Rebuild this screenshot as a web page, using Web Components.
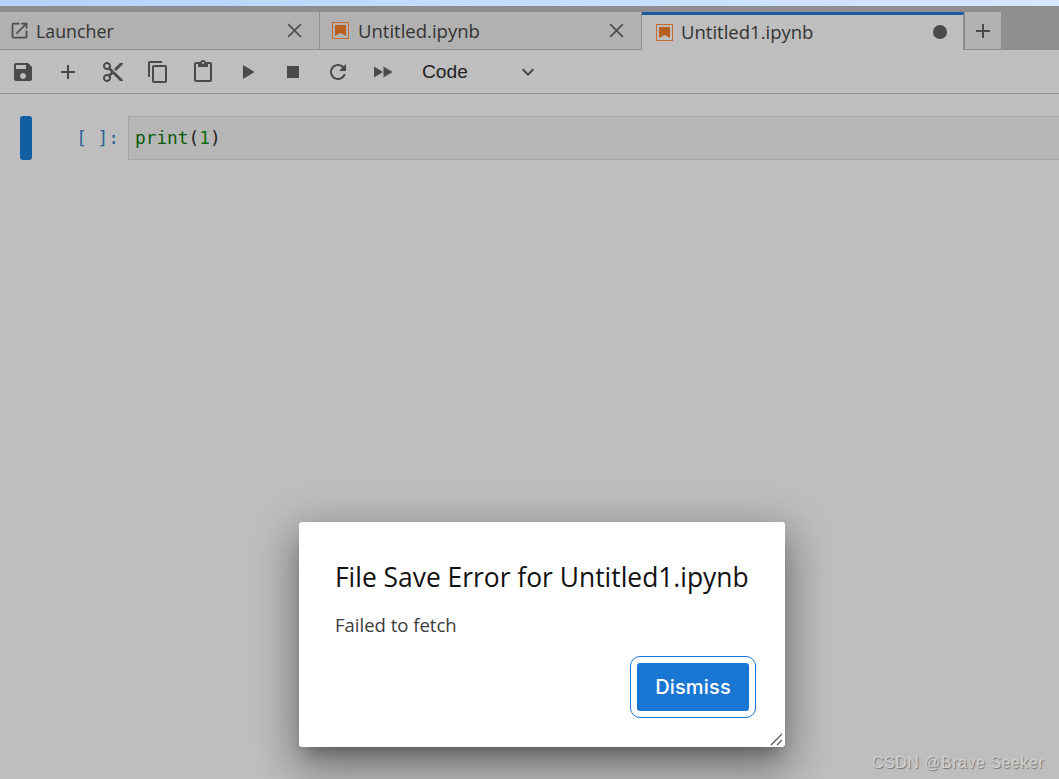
<!DOCTYPE html>
<html>
<head>
<meta charset="utf-8">
<title>Untitled1.ipynb</title>
<style>
  html, body { margin: 0; height: 100%; }
  body {
    position: relative;
    height: 779px;
    overflow: hidden;
    background: #bebebe;
    font-family: "Open Sans", "Noto Sans", sans-serif;
    color: #2b2b2b;
  }
</style>
</head>
<body>
  <jp-tabbar>
    <jp-tab icon="launcher" width="320">Launcher</jp-tab>
    <jp-tab icon="notebook" width="322">Untitled.ipynb</jp-tab>
    <jp-tab icon="notebook" width="322" active dirty>Untitled1.ipynb</jp-tab>
  </jp-tabbar>
  <jp-toolbar></jp-toolbar>
  <jp-cell>print(1)</jp-cell>
  <jp-dialog heading="File Save Error for Untitled1.ipynb">Failed to fetch</jp-dialog>
  <jp-watermark>CSDN @Brave Seeker</jp-watermark>

<script>
const ICONS = {
  save: 'M17 3H5a2 2 0 0 0-2 2v14c0 1.1.9 2 2 2h14c1.1 0 2-.9 2-2V7l-4-4zm-5 16c-1.66 0-3-1.34-3-3s1.34-3 3-3 3 1.34 3 3-1.34 3-3 3zm3-10H5V5h10v4z',
  add: 'M19 13h-6v6h-2v-6H5v-2h6V5h2v6h6v2z',
  cut: 'M9.64 7.64c.23-.5.36-1.05.36-1.64 0-2.21-1.79-4-4-4S2 3.79 2 6s1.79 4 4 4c.59 0 1.14-.13 1.64-.36L10 12l-2.36 2.36C7.14 14.13 6.59 14 6 14c-2.21 0-4 1.79-4 4s1.79 4 4 4 4-1.79 4-4c0-.59-.13-1.14-.36-1.64L12 14l7 7h3v-1L9.64 7.64zM6 8c-1.1 0-2-.89-2-2s.9-2 2-2 2 .89 2 2-.9 2-2 2zm0 12c-1.1 0-2-.89-2-2s.9-2 2-2 2 .89 2 2-.9 2-2 2zm6-7.5c-.28 0-.5-.22-.5-.5s.22-.5.5-.5.5.22.5.5-.22.5-.5.5zM19 3l-6 6 2 2 7-7V3z',
  copy: 'M16 1H4c-1.1 0-2 .9-2 2v14h2V3h12V1zm3 4H8c-1.1 0-2 .9-2 2v14c0 1.1.9 2 2 2h11c1.1 0 2-.9 2-2V7c0-1.1-.9-2-2-2zm0 16H8V7h11v14z',
  paste: 'M19 2h-4.18C14.4.84 13.3 0 12 0c-1.3 0-2.4.84-2.82 2H5c-1.1 0-2 .9-2 2v16c0 1.1.9 2 2 2h14c1.1 0 2-.9 2-2V4c0-1.1-.9-2-2-2zm-7 0c.55 0 1 .45 1 1s-.45 1-1 1-1-.45-1-1 .45-1 1-1zm7 18H5V4h2v3h10V4h2v16z',
  run: 'M7 5v14l11.5-7z',
  stop: 'M6 6h12v12H6z',
  refresh: 'M17.65 6.35C16.2 4.9 14.21 4 12 4c-4.42 0-7.99 3.58-7.99 8s3.57 8 7.99 8c3.73 0 6.84-2.55 7.73-6h-2.08c-.82 2.33-3.04 4-5.65 4-3.31 0-6-2.69-6-6s2.69-6 6-6c1.66 0 3.14.69 4.22 1.78L13 11h7V4l-2.35 2.35z',
  fastforward: 'M3 6.5v11l9-5.5zm9.5 0v11l9-5.5z',
  launcher: 'M19 19H5V5h7V3H5a2 2 0 0 0-2 2v14a2 2 0 0 0 2 2h14c1.1 0 2-.9 2-2v-7h-2v7zM14 3v2h3.59l-9.83 9.83 1.41 1.41L19 6.41V10h2V3h-7z',
  close: 'M5.4 4 12 10.6 18.6 4 20 5.4 13.4 12l6.6 6.6-1.4 1.4-6.6-6.6L5.4 20 4 18.6l6.6-6.6L4 5.4z',
  chevron: 'M7.4 8.6 12 13.2l4.6-4.6L18 10l-6 6-6-6z'
};

function svgIcon(name, size, color) {
  return `<svg width="${size}" height="${size}" viewBox="0 0 24 24" fill="${color}"><path d="${ICONS[name]}"/></svg>`;
}

class JpTabbar extends HTMLElement {
  constructor() {
    super();
    this.attachShadow({ mode: 'open' }).innerHTML = `
    <style>
      :host { display: block; height: 50px; background: linear-gradient(#8e8e8e, #8e8e8e) 0 6px no-repeat; box-sizing: border-box; }
      .sky { height: 6px; background: linear-gradient(90deg, #b5d3ff, #d6e7ff); }
      .tabs { display: flex; height: 44px; padding-top: 6px; box-sizing: border-box; }
      .add {
        width: 37px; height: 38px; box-sizing: border-box; display: flex; align-items: center; justify-content: center;
        background: #b1b1b1; border-left: 1px solid #8a8a8a; border-bottom: 1px solid #8a8a8a;
      }
    </style>
    <div class="sky"></div>
    <div class="tabs">
      <slot></slot>
      <div class="add">${svgIcon('add', 24, '#4a4a4a')}</div>
    </div>`;
  }
}

class JpTab extends HTMLElement {
  connectedCallback() {
    const active = this.hasAttribute('active');
    const notebook = this.getAttribute('icon') === 'notebook';
    const icon = notebook
      ? `<svg width="19" height="19" viewBox="0 0 19 19"><rect x="1.5" y="1.5" width="16" height="16" fill="none" stroke="#c9692a"/><path d="M4 4h11v11l-5.5-3L4 15z" fill="#b9601f"/></svg>`
      : svgIcon('launcher', 21, '#4f4f4f');
    const end = this.hasAttribute('dirty')
      ? `<span class="dot"></span>`
      : svgIcon('close', 21, '#4f4f4f');
    const left = active ? 13 : notebook ? 11 : 9;
    const gap = active ? 7 : notebook ? 8 : 6;
    this.attachShadow({ mode: 'open' }).innerHTML = `
    <style>
      :host { display: block; width: ${this.getAttribute('width')}px; height: 38px; flex: none; }
      .tab {
        height: 100%; box-sizing: border-box; display: flex; align-items: center; gap: ${gap}px;
        padding: 0 14px 0 ${left}px;
        background: ${active ? '#bebebe' : '#b1b1b1'};
        border-right: 1px solid #8f8f8f;
        border-bottom: ${active ? '0' : '1px solid #8f8f8f'};
        border-top: ${active ? '3px solid #1a5a9e' : '0'};
        font-size: ${notebook ? 18.5 : 17.8}px; color: #333;
      }
      .label { flex: 1; padding-bottom: ${active ? '3px' : '0'}; }
      svg { flex: none; display: block; }
      .dot { width: 14px; height: 14px; border-radius: 50%; background: #4a4a4a; margin-right: 2px; margin-bottom: 2px; }
    </style>
    <div class="tab">${icon}<span class="label"><slot></slot></span>${end}</div>`;
  }
}

class JpToolbar extends HTMLElement {
  constructor() {
    super();
    const names = ['save', 'add', 'cut', 'copy', 'paste', 'run', 'stop', 'refresh', 'fastforward'];
    const buttons = names.map(n => `<span class="btn">${svgIcon(n, 24, '#4a4a4a')}</span>`).join('');
    this.attachShadow({ mode: 'open' }).innerHTML = `
    <style>
      :host { display: flex; align-items: center; height: 44px; box-sizing: border-box; background: #bebebe; border-bottom: 1px solid #8f8f8f; }
      .btn { width: 45px; display: flex; justify-content: center; }
      svg { display: block; }
      .select { display: flex; align-items: center; width: 118px; margin-left: 17px; justify-content: space-between; font-size: 19.2px; color: #222; font-family: "Liberation Sans", sans-serif; }
    </style>
    ${buttons}
    <div class="select"><span>Code</span>${svgIcon('chevron', 24, '#4a4a4a')}</div>`;
  }
}

class JpCell extends HTMLElement {
  constructor() {
    super();
    this.attachShadow({ mode: 'open' }).innerHTML = `
    <style>
      :host { display: flex; height: 44px; margin-top: 22px; padding-left: 20px; font-family: "DejaVu Sans Mono", monospace; font-size: 17.8px; }
      .bar { width: 12px; background: #115ea3; border-radius: 3px; flex: none; }
      .prompt { width: 87px; text-align: right; color: #2a6396; line-height: 44px; flex: none; white-space: pre; }
      .editor { flex: 1; margin-left: 9px; box-sizing: border-box; background: #b6b6b6; border: 1px solid #a5a5a5; border-right: 0; padding-left: 6px; line-height: 42px; color: #222; }
      .fn { color: #0b5a0b; }
      .num { color: #0a6b0a; }
    </style>
    <div class="bar"></div>
    <div class="prompt">[ ]:</div>
    <div class="editor"><span class="fn">print</span>(<span class="num">1</span>)<slot hidden></slot></div>`;
  }
}

class JpDialog extends HTMLElement {
  connectedCallback() {
    this.attachShadow({ mode: 'open' }).innerHTML = `
    <style>
      :host { position: absolute; left: 299px; top: 522px; width: 486px; height: 225px; display: block; box-sizing: border-box; background: #fff; border-radius: 3px;
        box-shadow: 0 11px 15px -7px rgba(0,0,0,.3), 0 24px 38px 3px rgba(0,0,0,.2), 0 9px 46px 8px rgba(0,0,0,.2); padding: 35px 36px 0; }
      h1 { margin: 0; font-weight: 400; font-size: 26.4px; line-height: 40px; color: #111; white-space: nowrap; }
      p { margin: 15px 0 0; font-size: 18.5px; line-height: 26px; color: #3c3c3c; }
      .actions { display: flex; justify-content: flex-end; margin-top: 18px; }
      .focus { border: 1px solid #1976d2; border-radius: 10px; padding: 6px; margin-right: -7px; display: flex; }
      button { width: 112px; height: 48px; border: 0; border-radius: 3px; background: #1976d2; color: #fff; font: 500 20px Inter, "Liberation Sans", sans-serif; letter-spacing: .15px; padding: 0; }
      svg { position: absolute; right: 1px; bottom: 1px; display: block; }
    </style>
    <h1>${this.getAttribute('heading')}</h1>
    <p><slot></slot></p>
    <div class="actions"><div class="focus"><button>Dismiss</button></div></div>
    <svg width="14" height="14" viewBox="0 0 14 14" stroke="#555" stroke-width="1.2" fill="none"><path d="M1 13 12 2M7 13l5-5"/></svg>`;
  }
}

class JpWatermark extends HTMLElement {
  constructor() {
    super();
    this.attachShadow({ mode: 'open' }).innerHTML = `
    <style>
      :host { position: absolute; right: 15px; bottom: 7px; font: 16px "Liberation Sans", sans-serif; color: #d2d2d2; text-shadow: 1px 1px 1px #777; letter-spacing: .5px; }
    </style>
    <slot></slot>`;
  }
}

customElements.define('jp-tabbar', JpTabbar);
customElements.define('jp-tab', JpTab);
customElements.define('jp-toolbar', JpToolbar);
customElements.define('jp-cell', JpCell);
customElements.define('jp-dialog', JpDialog);
customElements.define('jp-watermark', JpWatermark);
</script>
</body>
</html>
